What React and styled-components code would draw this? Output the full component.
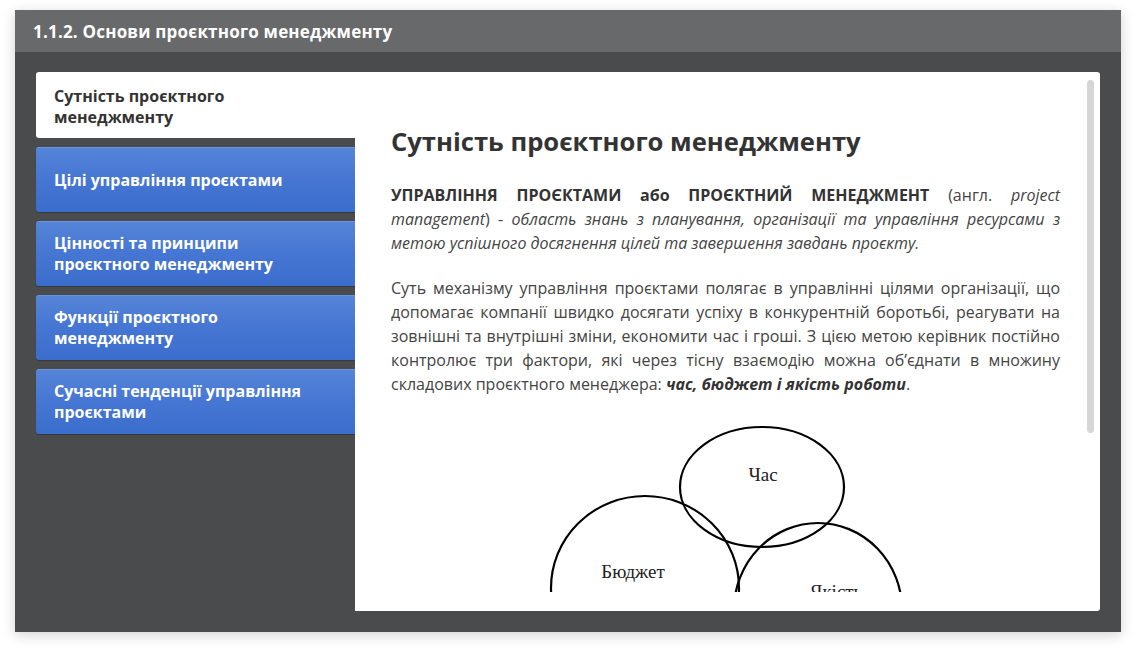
import styled, { createGlobalStyle } from "styled-components";

const GlobalStyle = createGlobalStyle`
  html, body {
    margin: 0;
    padding: 0;
    background: #ffffff;
  }
  body {
    font-family: "Open Sans", "Noto Sans", sans-serif;
  }
`;

const Page = styled.div`
  padding: 10px 15px 21px 15px;
`;

const Window = styled.section`
  width: 1106px;
  height: 622px;
  display: flex;
  flex-direction: column;
  background-color: #4a4b4d;
  box-shadow: 0 3px 12px rgba(0, 0, 0, 0.18);
`;

const Header = styled.header`
  height: 42px;
  flex-shrink: 0;
  display: flex;
  align-items: center;
  padding: 0 18px;
  background-color: #67696b;
  color: #ffffff;
  font-weight: 700;
  font-size: 17px;
  letter-spacing: 0.2px;
`;

const Body = styled.div`
  flex: 1;
  display: flex;
  padding: 20px 21px 21px 21px;
  min-height: 0;
`;

const TabList = styled.nav`
  width: 319px;
  flex-shrink: 0;
  display: flex;
  flex-direction: column;
  gap: 9px;
`;

const Tab = styled.div`
  height: ${(p) => (p.$active ? "66px" : "65px")};
  box-sizing: border-box;
  display: flex;
  align-items: center;
  padding: ${(p) => (p.$active ? "3px 20px 0 18px" : "0 20px 0 18px")};
  font-size: 16px;
  font-weight: 700;
  line-height: 21px;
  border-radius: 3px 0 0 3px;
  color: ${(p) => (p.$active ? "#333333" : "#ffffff")};
  background: ${(p) =>
    p.$active
      ? "#ffffff"
      : "linear-gradient(to bottom, #5584d8 0%, #4676d3 50%, #3b6dcc 100%)"};
  border-top: ${(p) => (p.$active ? "none" : "1px solid #6b93de")};
  box-shadow: ${(p) => (p.$active ? "none" : "0 1px 1px rgba(0,0,0,0.25)")};
`;

const ContentPane = styled.div`
  flex: 1;
  position: relative;
  display: flex;
  flex-direction: column;
  background: #ffffff;
  border-radius: 0 3px 3px 0;
  padding-bottom: 19px;
  min-height: 0;
`;

const Scroll = styled.div`
  flex: 1;
  overflow: hidden;
  padding: 0 40px 0 36px;
`;

const ScrollThumb = styled.div`
  position: absolute;
  top: 8px;
  right: 6px;
  width: 7px;
  height: 353px;
  border-radius: 4px;
  background: #d6d6d6;
`;

const Title = styled.h2`
  margin: 54px 0 26px 0;
  font-size: 25.6px;
  line-height: 31px;
  font-weight: 700;
  color: #333333;
`;

const Paragraph = styled.p`
  margin: 0 0 21px 0;
  font-size: 16px;
  line-height: 24px;
  color: #444444;
  text-align: justify;
`;

const Strong = styled.strong`
  font-weight: 700;
  color: #333333;
`;

const Em = styled.em`
  font-style: italic;
`;

const Figure = styled.figure`
  margin: 24px 0 0 0;
  display: flex;
  justify-content: center;
`;

const Diagram = styled.svg`
  display: block;
  font-family: "Liberation Serif", "Times New Roman", serif;
`;

const tabs = [
  "Сутність проєктного менеджменту",
  "Цілі управління проєктами",
  "Цінності та принципи проєктного менеджменту",
  "Функції проєктного менеджменту",
  "Сучасні тенденції управління проєктами",
];

export default function App() {
  return (
    <>
      <GlobalStyle />
      <Page>
        <Window>
          <Header>1.1.2. Основи проєктного менеджменту</Header>
          <Body>
            <TabList>
              {tabs.map((t, i) => (
                <Tab key={t} $active={i === 0}>
                  {t}
                </Tab>
              ))}
            </TabList>
            <ContentPane>
              <Scroll>
                <Title>Сутність проєктного менеджменту</Title>
                <Paragraph>
                  <Strong>УПРАВЛІННЯ ПРОЄКТАМИ або ПРОЄКТНИЙ МЕНЕДЖМЕНТ</Strong>{" "}
                  (англ. <Em>project management</Em>) -{" "}
                  <Em>
                    область знань з планування, організації та управління
                    ресурсами з метою успішного досягнення цілей та завершення
                    завдань проєкту.
                  </Em>
                </Paragraph>
                <Paragraph>
                  Суть механізму управління проєктами полягає в управлінні
                  цілями організації, що допомагає компанії швидко досягати
                  успіху в конкурентній боротьбі, реагувати на зовнішні та
                  внутрішні зміни, економити час і гроші. З цією метою керівник
                  постійно контролює три фактори, які через тісну взаємодію
                  можна об’єднати в множину складових проєктного менеджера:{" "}
                  <Strong>
                    <Em>час, бюджет і якість роботи</Em>
                  </Strong>
                  .
                </Paragraph>
                <Figure>
                  <Diagram width="360" height="260" viewBox="0 0 360 260">
                    <g fill="none" stroke="#000" strokeWidth="2.2">
                      <ellipse cx="216" cy="67" rx="82" ry="60" />
                      <ellipse cx="99" cy="168" rx="94" ry="92" />
                      <ellipse cx="272" cy="190" rx="84" ry="87" />
                    </g>
                    <g fill="#222" fontSize="19" textAnchor="middle">
                      <text x="217" y="61">Час</text>
                      <text x="87" y="158">Бюджет</text>
                      <text x="290" y="178">Якість</text>
                    </g>
                  </Diagram>
                </Figure>
              </Scroll>
              <ScrollThumb />
            </ContentPane>
          </Body>
        </Window>
      </Page>
    </>
  );
}
